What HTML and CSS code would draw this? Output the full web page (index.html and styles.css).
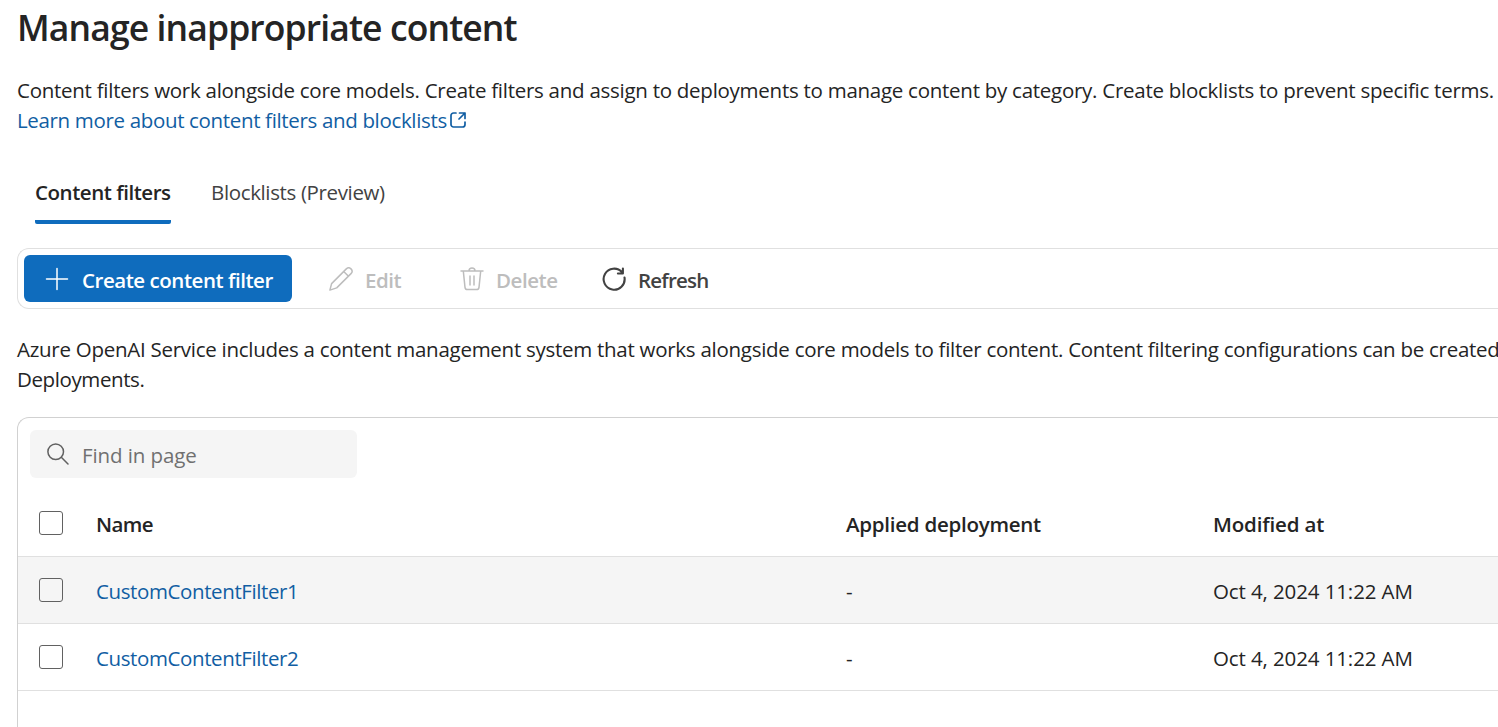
FILE: index.html
```html
<!DOCTYPE html>
<html lang="en">
<head>
<meta charset="utf-8">
<title>Manage inappropriate content</title>
<link rel="stylesheet" href="styles.css">
</head>
<body>
<main class="page">
  <h1 class="title"><span>Manage inappropriate content</span></h1>
  <div class="intro">
    <p class="intro-text">Content filters work alongside core models. Create filters and assign to deployments to manage content by category. Create blocklists to prevent specific terms.</p>
    <a class="learn-link"><span class="learn-text">Learn more about content filters and blocklists</span><svg class="open-icon" viewBox="0 0 16 16" fill="none" stroke="currentColor" stroke-width="1.7" stroke-linecap="round" stroke-linejoin="round"><path d="M6 1H3.5A2.5 2.5 0 0 0 1 3.500v9A2.500 2.500 0 0 0 3.500 15h9a2.500 2.500 0 0 0 2.500-2.500V10M9.500 1H15v5.500M15 1L9 7"/></svg></a>
  </div>
  <nav class="tabs">
    <a class="tab tab-active"><span>Content filters</span></a>
    <a class="tab"><span>Blocklists (Preview)</span></a>
  </nav>
  <div class="toolbar">
    <button class="btn btn-primary"><svg class="icon" viewBox="0 0 24 24" fill="none" stroke="currentColor" stroke-width="1.500" stroke-linecap="round"><path d="M12 1.500v21M1.500 12h21"/></svg><span>Create content filter</span></button>
    <button class="btn btn-edit"><svg class="icon" viewBox="0 0 24 24" fill="none" stroke="currentColor" stroke-width="1.500" stroke-linejoin="round"><path d="M17.300 1.900a3.250 3.250 0 0 1 4.700 4.700L7.700 20.900L.9 23.100l1.700-6.500zM14.700 4.500l4.800 4.800"/></svg><span>Edit</span></button>
    <button class="btn btn-delete"><svg class="icon" viewBox="0 0 24 24" fill="none" stroke="currentColor" stroke-width="1.500" stroke-linecap="round"><path d="M1 4h22M9 4a3 3 0 0 1 6 0M3.300 4l1.700 16.300a2.500 2.500 0 0 0 2.500 2.200h9a2.500 2.500 0 0 0 2.500-2.200l1.700-16.300M10 9v9M14 9v9"/></svg><span>Delete</span></button>
    <button class="btn btn-refresh"><svg class="icon" viewBox="0 0 24 24" fill="none" stroke="currentColor" stroke-width="2.100" stroke-linecap="round" stroke-linejoin="round"><path d="M22.500 10.500A10.500 10.500 0 1 1 20 5.200M20.900 1.500v5h-5"/></svg><span>Refresh</span></button>
  </div>
  <div class="description">
    <p class="desc-line">Azure OpenAI Service includes a content management system that works alongside core models to filter content. Content filtering configurations can be created</p>
    <p class="desc-last">Deployments.</p>
  </div>
  <section class="card">
    <div class="search"><svg class="search-icon" viewBox="0 0 22 22" fill="none" stroke="currentColor" stroke-width="1.500" stroke-linecap="round"><circle cx="8.700" cy="8.700" r="7.800"/><path d="M14.300 14.300L21 21"/></svg><span>Find in page</span></div>
    <div class="row row-head">
      <span class="check"></span>
      <span class="h-name">Name</span>
      <span class="h-applied">Applied deployment</span>
      <span class="h-modified">Modified at</span>
    </div>
    <div class="row row-hover">
      <span class="check"></span>
      <a class="name-link">CustomContentFilter1</a>
      <span>-</span>
      <span class="date">Oct 4, 2024 11:22 AM</span>
    </div>
    <div class="row">
      <span class="check"></span>
      <a class="name-link">CustomContentFilter2</a>
      <span>-</span>
      <span class="date">Oct 4, 2024 11:22 AM</span>
    </div>
  </section>
</main>
</body>
</html>
```
FILE: styles.css
```css
* { box-sizing: border-box; }
html, body { margin: 0; height: 727px; overflow: hidden; background: #fff; }
body {
  font: 400 20.5px/30px "Open Sans", "Noto Sans", sans-serif;
  color: #242424;
  white-space: nowrap;
}
.page { height: 727px; padding: 3px 0 0 17px; display: flex; flex-direction: column; overflow: hidden; }
p, h1 { margin: 0; }
.title { font-size: 35.5px; line-height: 48px; font-weight: 600; letter-spacing: -0.89px; }
.intro { margin-top: 24px; display: flex; flex-direction: column; }
.intro-text { letter-spacing: -0.265px; }
.learn-link { display: flex; color: #115ea3; }
.learn-text { letter-spacing: -0.34px; }
.open-icon { width: 16px; height: 16px; margin: 7px 0 0 3px; flex: none; }
.tabs { display: flex; gap: 40px; padding-left: 18px; margin-top: 42px; letter-spacing: -0.36px; }
.tab { height: 47px; color: #424242; }
.tab-active { width: 136px; font-weight: 600; letter-spacing: -0.46px; color: #242424; border-bottom: 4px solid #0f6cbd; border-radius: 2px; }
.toolbar {
  margin-top: 24px; height: 61px; flex: none;
  border: 1px solid #e0e0e0; border-right: 0; border-radius: 12px 0 0 12px;
  display: flex; align-items: flex-start; padding: 6px;
}
.btn {
  height: 47px; padding: 3px 0 0; border: 0; background: none; flex: none;
  display: flex; align-items: center; font: inherit; font-weight: 600; letter-spacing: -0.45px; color: #bdbdbd;
}
.icon { width: 24px; height: 24px; flex: none; margin-top: -3px; }
.btn-primary { width: 268px; padding-left: 21px; gap: 13px; background: #0f6cbd; color: #fff; border-radius: 6px; letter-spacing: -0.46px; }
.btn-edit { width: 131px; padding-left: 37px; gap: 12px; }
.btn-delete { width: 143px; padding-left: 37px; gap: 12px; }
.btn-refresh { padding-left: 36px; gap: 12px; color: #424242; letter-spacing: -0.8px; }
.description { margin-top: 25px; }
.desc-line { letter-spacing: -0.27px; }
.desc-last { letter-spacing: -0.4px; }
.card {
  margin-top: 23px; flex: 1; padding-top: 12px;
  border: 1px solid #d1d1d1; border-right: 0; border-bottom: 0; border-radius: 12px 0 0 0;
}
.search {
  margin-left: 12px; width: 327px; height: 48px; padding: 2px 0 0 17px;
  display: flex; align-items: center; gap: 13px;
  background: #f5f5f5; border-radius: 6px; color: #707070; letter-spacing: -0.1px;
}
.search-icon { width: 22px; height: 22px; margin-top: -3px; color: #616161; }
.row {
  height: 67px; padding-left: 21px; border-bottom: 1px solid #e0e0e0;
  display: grid; grid-template-columns: 57px 750px 367px 1fr; align-items: center;
}
.row > :not(.check) { padding-top: 2px; }
.row-head { height: 79px; padding-top: 12px; font-weight: 600; letter-spacing: -0.25px; }
.row-hover { background: #f5f5f5; }
.check { width: 24px; height: 24px; border: 1px solid #616161; border-radius: 3px; background: #fff; }
.row-hover .check { background: transparent; }
.name-link { color: #115ea3; letter-spacing: -0.39px; }
.h-name { letter-spacing: -0.6px; }
.h-modified { letter-spacing: -0.15px; }
.date { letter-spacing: -0.11px; }
```
